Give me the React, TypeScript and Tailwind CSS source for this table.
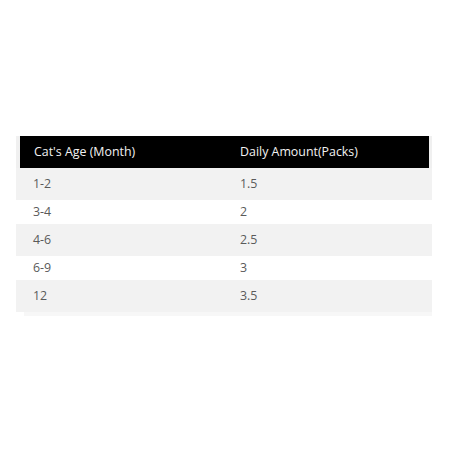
const ROWS = [
  { age: '1-2', amount: '1.5' },
  { age: '3-4', amount: '2' },
  { age: '4-6', amount: '2.5' },
  { age: '6-9', amount: '3' },
  { age: '12', amount: '3.5' },
];

export default function App() {
  return (
    <div
      className="min-h-[450px] bg-white pt-[136px] pl-4"
      style={{ fontFamily: '"Open Sans", "Liberation Sans", sans-serif' }}
    >
      <div className="w-[416px]">
        {/* header */}
        <div className="bg-[#f0f0f0] pl-1 pr-[3px]">
          <div className="flex h-8 items-center bg-black text-[12.4px] text-[#f2f2f2]">
            <div className="w-[220px] pl-[14px]">Cat's Age (Month)</div>
            <div>Daily Amount(Packs)</div>
          </div>
        </div>

        {/* rows */}
        {ROWS.map((r, i) => (
          <div
            key={r.age}
            className={
              i % 2 === 0
                ? 'flex h-8 items-center bg-[#f2f2f2] text-[12.4px] text-[#5a5a5a]'
                : 'flex h-6 items-center bg-white text-[12.4px] text-[#5a5a5a]'
            }
          >
            <div className="w-[224px] pl-[17px]">{r.age}</div>
            <div>{r.amount}</div>
          </div>
        ))}
        <div className="ml-2 h-1 bg-[#f7f7f7]" />
      </div>
    </div>
  );
}
